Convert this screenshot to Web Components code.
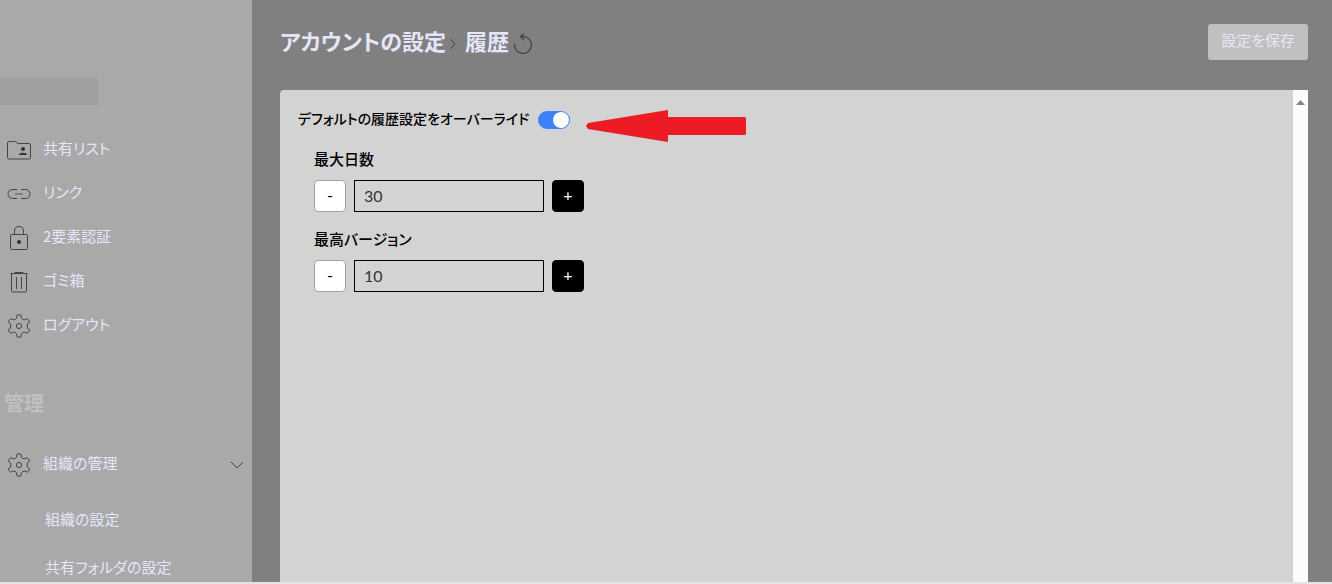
<!DOCTYPE html>
<html lang="ja">
<head>
<meta charset="utf-8">
<title>アカウントの設定 - 履歴</title>
<style>
  body {
    margin: 0;
    background: #e4e4e4;
    color: #000;
    font: 15px/24px "Noto Sans CJK JP", sans-serif;
    font-feature-settings: "palt";
  }
</style>
</head>
<body>
<app-shell>
  <side-bar slot="side">
    <nav-item icon="shared">共有リスト</nav-item>
    <nav-item icon="link">リンク</nav-item>
    <nav-item icon="lock">2要素認証</nav-item>
    <nav-item icon="trash">ゴミ箱</nav-item>
    <nav-item icon="gear">ログアウト</nav-item>
    <nav-group slot="admin" heading="管理">
      <nav-item icon="gear" expandable>組織の管理</nav-item>
      <nav-item sub>組織の設定</nav-item>
      <nav-item sub>共有フォルダの設定</nav-item>
    </nav-group>
  </side-bar>
  <page-header section="アカウントの設定" page="履歴">設定を保存</page-header>
  <settings-panel>
    <toggle-switch>デフォルトの履歴設定をオーバーライド</toggle-switch>
    <number-stepper value="30">最大日数</number-stepper>
    <number-stepper value="10">最高バージョン</number-stepper>
    <pointer-arrow slot="note"></pointer-arrow>
  </settings-panel>
</app-shell>

<script>
const ICONS = {
  shared: '<path d="M2 3.5H8.5L11 5.5H22Q23.5 5.5 23.5 7V19.5Q23.5 21 22 21H2Q.5 21 .5 19.5V5Q.5 3.5 2 3.5Z"/><circle cx="16" cy="11" r="2" fill="#333" stroke="none"/><path d="M12 17Q12 14.8 16 14.8T20 17Z" fill="#333" stroke="none"/>',
  link: '<path d="M10 7.5H5.5A4.500 4.500 0 0 0 5.500 16.500H10M14 7.500H18.500A4.500 4.500 0 0 1 18.500 16.500H14"/><path d="M8 12H16" stroke="#777" stroke-width="1.600"/>',
  lock: '<rect x="3.500" y="8.500" width="17" height="15" rx="1"/><path d="M7.500 8.500V5Q7.500 .5 12 .5T16.500 5V8.500"/><circle cx="12" cy="16" r="2" fill="#333" stroke="none"/>',
  trash: '<path d="M3.500 3.500H20.500M8 3V2.500H16V3M4.500 3.500V20.500Q4.500 22 6 22H18Q19.500 22 19.500 20.500V3.500M9.500 7V19M14.500 7V19"/>',
  gear: '<path d="M10 1.200Q12 .2 14 1.200L14.400 4.200Q15.600 6 17.600 5.800L20.200 4.800Q22.200 6 22.600 8L20.600 10Q19.600 12 20.600 14L22.600 16Q22.200 18 20.200 19.200L17.600 18.200Q15.600 18 14.400 19.800L14 22.800Q12 23.800 10 22.800L9.600 19.800Q8.400 18 6.400 18.200L3.800 19.200Q1.800 18 1.400 16L3.400 14Q4.400 12 3.400 10L1.400 8Q1.800 6 3.800 4.800L6.400 5.800Q8.400 6 9.600 4.200Z"/><circle cx="12" cy="12" r="2.600"/>'
};

class BaseElement extends HTMLElement {
  render(html) { this.attachShadow({ mode: 'open' }).innerHTML = html; }
}

customElements.define('app-shell', class extends BaseElement {
  connectedCallback() {
    this.render(`<style>
      :host { display: grid; grid-template-columns: 252px 1fr; height: calc(100vh - 2px); overflow: hidden; background: #808080; }
      main { display: flex; flex-direction: column; min-width: 0; padding: 0 24px 0 28px; }
      ::slotted(settings-panel) { flex: 1; }
    </style><slot name="side"></slot><main><slot></slot></main>`);
  }
});

customElements.define('side-bar', class extends BaseElement {
  connectedCallback() {
    this.render(`<style>
      :host { display: block; background: #a9a9a9; overflow: hidden; padding-top: 78px; }
      .user { width: 98px; height: 27px; background: #a0a0a0; margin-bottom: 23px; }
    </style><div class="user"></div><nav><slot></slot><slot name="admin"></slot></nav>`);
  }
});

customElements.define('nav-group', class extends BaseElement {
  connectedCallback() {
    this.render(`<style>
      :host { display: block; padding-top: 39px; }
      h2 { margin: 0 0 24px 4px; font-size: 20px; line-height: 32px; font-weight: 700; color: #c0c0c0; }
    </style><h2>${this.getAttribute('heading')}</h2><slot></slot>`);
  }
});

customElements.define('nav-item', class extends BaseElement {
  connectedCallback() {
    const icon = this.getAttribute('icon');
    this.render(`<style>
      :host { display: block; }
      :host([expandable]) { margin-bottom: 10px; }
      a { display: flex; align-items: center; gap: 12px; height: 44px; padding: 0 8px 0 7px; color: #e6e6fa; text-decoration: none; }
      :host([sub]) a { height: 48px; padding-left: 45px; }
      svg { flex: none; fill: none; stroke: #444; }
      span { flex: 1; white-space: nowrap; padding-bottom: 4px; }
    </style><a href="#">
      ${icon ? `<svg width="24" height="24" viewBox="0 0 24 24">${ICONS[icon]}</svg>` : ''}
      <span><slot></slot></span>
      ${this.hasAttribute('expandable') ? '<svg width="14" height="8" viewBox="0 0 14 8"><path d="M1 1L7 7L13 1"/></svg>' : ''}
    </a>`);
  }
});

customElements.define('page-header', class extends BaseElement {
  connectedCallback() {
    this.render(`<style>
      :host { display: flex; justify-content: space-between; align-items: flex-start; padding: 24px 0 30px; color: #e6e6fa; }
      h1 { display: flex; align-items: center; margin: 0; font-size: 22px; line-height: 32px; font-weight: 700; white-space: nowrap; }
      .sep { margin: 8px 8px 0 3px; }
      svg { display: block; fill: none; stroke: #444; }
      .reset { border: 0; padding: 0; margin: 6px 0 0 4px; background: none; }
      .save { height: 36px; padding: 0 13px 4px; border: 0; border-radius: 3px; background: #c0c0c0; color: inherit; font: inherit; font-feature-settings: inherit; }
    </style>
    <h1>${this.getAttribute('section')}
      <svg class="sep" width="8" height="12" viewBox="0 0 8 12"><path d="M1 1L6 6L1 11"/></svg>
      ${this.getAttribute('page')}
      <button class="reset" aria-label="リセット"><svg width="20" height="22" viewBox="0 0 20 22"><path d="M1.500 12A8.500 8.500 0 1 0 10 4.500H7.500M11 1.500L7.500 4.500L11 8" stroke-width="1.300"/></svg></button>
    </h1>
    <button class="save"><slot></slot></button>`);
  }
});

customElements.define('settings-panel', class extends BaseElement {
  connectedCallback() {
    this.render(`<style>
      :host { display: flex; position: relative; background: #d3d3d3; border-radius: 4px 0 0 0; }
      .body { flex: 1; padding: 16px 18px; }
      .bar { width: 15px; background: #fcfcfc; display: flex; justify-content: center; }
      .bar svg { margin-top: 10px; }
      ::slotted([slot=note]) { position: absolute; left: 306px; top: 20px; }
    </style>
    <div class="body"><slot></slot></div>
    <div class="bar"><svg width="9" height="5" viewBox="0 0 9 5"><path d="M0 5L4.500 0L9 5Z" fill="#858585"/></svg></div>
    <slot name="note"></slot>`);
  }
});

customElements.define('toggle-switch', class extends BaseElement {
  connectedCallback() {
    this.render(`<style>
      :host { display: block; padding-bottom: 2px; }
      label { display: flex; align-items: flex-end; gap: 9px; font-size: 14px; font-weight: 500; white-space: nowrap; }
      input { appearance: none; box-sizing: border-box; display: flex; width: 32px; height: 18px; margin: 0 0 1px; padding: 1px; border-radius: 9px; background: #3b82f6; }
      input::before { content: ""; width: 16px; height: 16px; border-radius: 50%; background: #fff; }
      input:checked::before { margin-left: auto; }
    </style><label><slot></slot><input type="checkbox" role="switch" checked></label>`);
  }
});

customElements.define('number-stepper', class extends BaseElement {
  connectedCallback() {
    this.render(`<style>
      :host { display: block; padding: 16px 0 0 16px; }
      label { display: block; margin-bottom: 10px; line-height: 22px; font-weight: 500; }
      .row { display: flex; gap: 8px; }
      button, input { box-sizing: border-box; height: 32px; margin: 0; font: 16px/24px Lato, sans-serif; }
      button { width: 32px; padding: 0 0 2px; border: 1px solid #9ca3af; border-radius: 4px; background: #fff; color: #000; }
      .plus { border-color: #000; background: #000; color: #fff; }
      input { width: 190px; padding: 0 9px 1px; border: 1px solid #000; border-radius: 0; background: transparent; color: #333; }
    </style>
    <label for="n"><slot></slot></label>
    <div class="row"><button>-</button><input id="n" type="text" inputmode="numeric" value="${this.getAttribute('value')}"><button class="plus">+</button></div>`);
  }
});

customElements.define('pointer-arrow', class extends BaseElement {
  connectedCallback() {
    this.render(`<style>:host, svg { display: block; }</style>
    <svg width="160" height="32" viewBox="0 0 160 32"><path d="M2 13L82 0V7H159L160 8V24L159 25H82V32L2 19L0 16Z" fill="#ed1c24"/></svg>`);
  }
});
</script>
</body>
</html>
